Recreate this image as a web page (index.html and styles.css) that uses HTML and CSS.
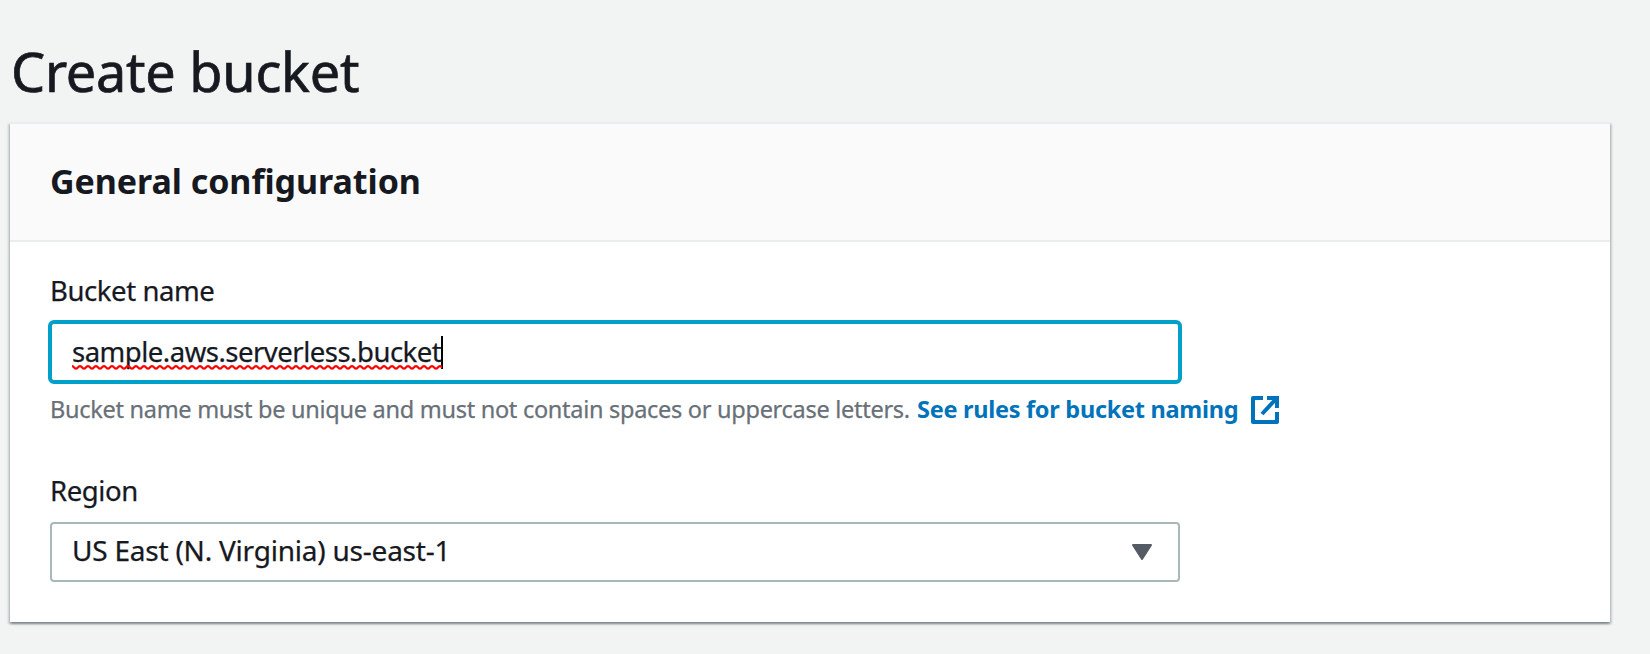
FILE: index.html
```html
<!DOCTYPE html>
<html lang="en">
<head>
<meta charset="utf-8">
<title>Create bucket</title>
<link rel="stylesheet" href="styles.css">
</head>
<body>
<main class="page">
  <h1 class="title"><span>Create bucket</span></h1>
  <section class="panel">
    <header class="panel-header"><h2 class="panel-title"><span>General configuration</span></h2></header>
    <div class="panel-body">
      <div class="field field-name">
        <div class="label"><span class="t-name">Bucket name</span></div>
        <div class="input">
          <span class="value">sample.aws.serverless.bucket<svg class="squiggle" width="370" height="5"><defs><pattern id="wave" width="8" height="5" patternUnits="userSpaceOnUse"><path d="M-2 1.2 L0 1.2 Q1.2 1.2 2 2.4 T4 3.6 T6 2.4 T8 1.2 H10" fill="none" stroke="#f00" stroke-width="2.2"/></pattern></defs><rect width="370" height="5" fill="url(#wave)"/></svg></span><span class="caret"></span>
        </div>
        <div class="hint"><span class="hint-text">Bucket name must be unique and must not contain spaces or uppercase letters.</span><a class="link">See rules for bucket naming</a><svg class="external" width="28" height="28" viewBox="0 0 28 28" fill="none" stroke="#0073bb" stroke-width="4"><path d="M12 2H2V26H26V16" stroke-linejoin="round"/><path d="M16 2H26V12M25 3L11 18"/></svg></div>
      </div>
      <div class="field">
        <div class="label"><span class="t-region">Region</span></div>
        <div class="select"><span class="selected">US East (N. Virginia) us-east-1</span><svg class="arrow" width="20" height="16" viewBox="0 0 20 16"><path d="M1 1H19L10 15Z" fill="#545b64" stroke="#545b64" stroke-width="2" stroke-linejoin="round"/></svg></div>
      </div>
    </div>
  </section>
</main>
</body>
</html>
```
FILE: styles.css
```css
* { box-sizing: border-box; }
body {
  margin: 0;
  height: 654px;
  overflow: hidden;
  background: #f2f3f3;
  color: #16191f;
  font-family: "Noto Sans", sans-serif;
  -webkit-text-stroke: .25px currentColor;
}
.page { padding: 41px 40px 0 10px; }
.title {
  margin: 0 0 21px;
  padding-left: 1px;
  font-size: 54px;
  line-height: 60px;
  font-weight: 400;
  letter-spacing: -.25px;
  -webkit-text-stroke: .7px currentColor;
}
.panel {
  height: 500px;
  background: #fff;
  border-top: 2px solid #eaeded;
  box-shadow: 0 2px 2px 0 rgba(0, 28, 36, .3), 2px 2px 2px 0 rgba(0, 28, 36, .15), -2px 2px 2px 0 rgba(0, 28, 36, .15);
}
.panel-header {
  height: 118px;
  padding: 0 40px 2px;
  background: #fafafa;
  border-bottom: 2px solid #eaeded;
  display: flex;
  align-items: center;
}
.panel-title { margin: 0; font-size: 34px; line-height: 48px; font-weight: 700; letter-spacing: -.06px; -webkit-text-stroke: 0; }
.panel-body { padding: 29px 40px 0; }
.field-name { height: 200px; }
.label { height: 49px; font-size: 27.5px; line-height: 40px; letter-spacing: -.42px; }
.input {
  display: flex;
  align-items: flex-start;
  width: 1134px;
  height: 64px;
  margin-left: -2px;
  padding-left: 20px;
  border: 4px solid #00a1c9;
  border-radius: 6px;
  background: #fff;
  font-size: 27.5px;
  line-height: 55px;
  letter-spacing: -.5px;
}
.value { position: relative; width: 369px; white-space: nowrap; }
.squiggle { position: absolute; left: 0; top: 41px; }
.caret { width: 2px; height: 33px; margin-top: 12px; background: #000; }
.hint {
  display: flex;
  align-items: center;
  margin-top: 7px;
  font-size: 23.5px;
  line-height: 36px;
  letter-spacing: -.28px;
  color: #687078;
  white-space: nowrap;
}
.hint-text { width: 867px; }
.link { width: 334px; color: #0073bb; font-weight: 700; letter-spacing: -.28px; -webkit-text-stroke: 0; }
.external { margin-top: 2px; }
.select {
  display: flex;
  width: 1130px;
  height: 60px;
  margin-top: 2px;
  padding: 0 26px 0 20px;
  border: 2px solid #aab7b8;
  border-radius: 4px;
  justify-content: space-between;
  font-size: 28px;
  line-height: 53px;
  letter-spacing: -.22px;
}
.arrow { margin-top: 20px; }
```
